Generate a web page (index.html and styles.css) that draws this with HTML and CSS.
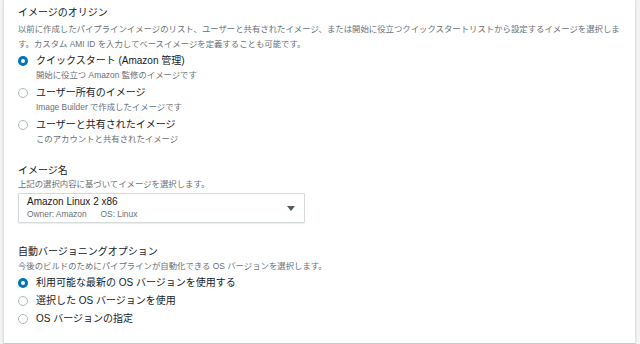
FILE: index.html
```html
<!DOCTYPE html>
<html lang="ja">
<head>
    <meta charset="UTF-8">
    <meta name="viewport" content="width=device-width, initial-scale=1.0">
    <title>イメージの選択</title>
    <link rel="stylesheet" href="styles.css">
</head>
<body>
    <div class="card">
        <div class="field">
            <div class="label">イメージのオリジン</div>
            <div class="desc desc-wide">以前に作成したパイプラインイメージのリスト、ユーザーと共有されたイメージ、または開始に役立つクイックスタートリストから設定するイメージを選択します。カスタム AMI ID を入力してベースイメージを定義することも可能です。</div>

            <div class="radio-group">
                <label class="radio">
                    <span class="dot checked"></span>
                    <span class="radio-text">
                        <span class="radio-label">クイックスタート (Amazon 管理)</span>
                        <span class="desc">開始に役立つ Amazon 監修のイメージです</span>
                    </span>
                </label>
                <label class="radio">
                    <span class="dot"></span>
                    <span class="radio-text">
                        <span class="radio-label">ユーザー所有のイメージ</span>
                        <span class="desc">Image Builder で作成したイメージです</span>
                    </span>
                </label>
                <label class="radio">
                    <span class="dot"></span>
                    <span class="radio-text">
                        <span class="radio-label">ユーザーと共有されたイメージ</span>
                        <span class="desc">このアカウントと共有されたイメージ</span>
                    </span>
                </label>
            </div>
        </div>

        <div class="field field-name">
            <div class="label">イメージ名</div>
            <div class="desc">上記の選択内容に基づいてイメージを選択します。</div>
            <div class="select">
                <div class="select-text">
                    <div class="select-title">Amazon Linux 2 x86</div>
                    <div class="select-meta"><span>Owner: Amazon</span><span>OS: Linux</span></div>
                </div>
                <span class="caret"></span>
            </div>
        </div>

        <div class="field field-version">
            <div class="label">自動バージョニングオプション</div>
            <div class="desc">今後のビルドのためにパイプラインが自動化できる OS バージョンを選択します。</div>
            <div class="radio-group compact">
                <label class="radio">
                    <span class="dot checked"></span>
                    <span class="radio-label">利用可能な最新の OS バージョンを使用する</span>
                </label>
                <label class="radio">
                    <span class="dot"></span>
                    <span class="radio-label">選択した OS バージョンを使用</span>
                </label>
                <label class="radio">
                    <span class="dot"></span>
                    <span class="radio-label">OS バージョンの指定</span>
                </label>
            </div>
        </div>
    </div>
</body>
</html>
```

FILE: styles.css
```css
body {
    font-family: "Liberation Sans", "Noto Sans CJK JP", sans-serif;
    background: #f2f3f3;
    margin: 0;
    padding: 0;
    color: #16191f;
}
.card {
    margin: 0 4px 0 3px;
    padding: 6px 14px 17px 14px;
    background: #fff;
    border: 1px solid #e1e4e4;
    border-top: none;
    border-bottom-color: #c6cccd;
    box-shadow: 0 1px 1px rgba(0, 28, 36, 0.25);
}
.label {
    font-size: 10px;
    line-height: 14px;
}
.desc {
    display: block;
    font-size: 8.4px;
    line-height: 14px;
    color: #687078;
}
.desc-wide {
    margin-top: 2px;
    line-height: 14.5px;
}
.radio-group {
    display: flex;
    flex-direction: column;
    gap: 4px;
    margin-top: 3px;
}
.radio-group.compact {
    gap: 4px;
    margin-top: 3px;
}
.radio {
    display: flex;
    align-items: flex-start;
    gap: 8px;
}
.radio-text {
    display: flex;
    flex-direction: column;
}
.radio-label {
    font-size: 10px;
    line-height: 14px;
}
.dot {
    box-sizing: border-box;
    width: 10px;
    height: 10px;
    margin-top: 2px;
    border: 1px solid #aab7b8;
    border-radius: 50%;
    background: #fff;
    flex-shrink: 0;
}
.dot.checked {
    border: 3px solid #0073bb;
}
.field-name {
    margin-top: 18px;
}
.field-name .desc {
    line-height: 13px;
}
.select {
    display: flex;
    align-items: center;
    justify-content: space-between;
    margin-top: 2px;
    width: 287px;
    height: 30px;
    box-sizing: border-box;
    padding: 0 9px 0 8px;
    border: 1px solid #d5dbdb;
    border-radius: 1px;
    box-shadow: 0 1px 1px rgba(0, 28, 36, 0.08);
}
.select-title {
    font-size: 10px;
    line-height: 13px;
}
.select-meta {
    display: flex;
    gap: 14px;
    font-size: 8.4px;
    line-height: 13px;
    color: #687078;
}
.caret {
    width: 0;
    height: 0;
    border-left: 4px solid transparent;
    border-right: 4px solid transparent;
    border-top: 5px solid #545b64;
}
.field-version {
    margin-top: 22px;
}
```
